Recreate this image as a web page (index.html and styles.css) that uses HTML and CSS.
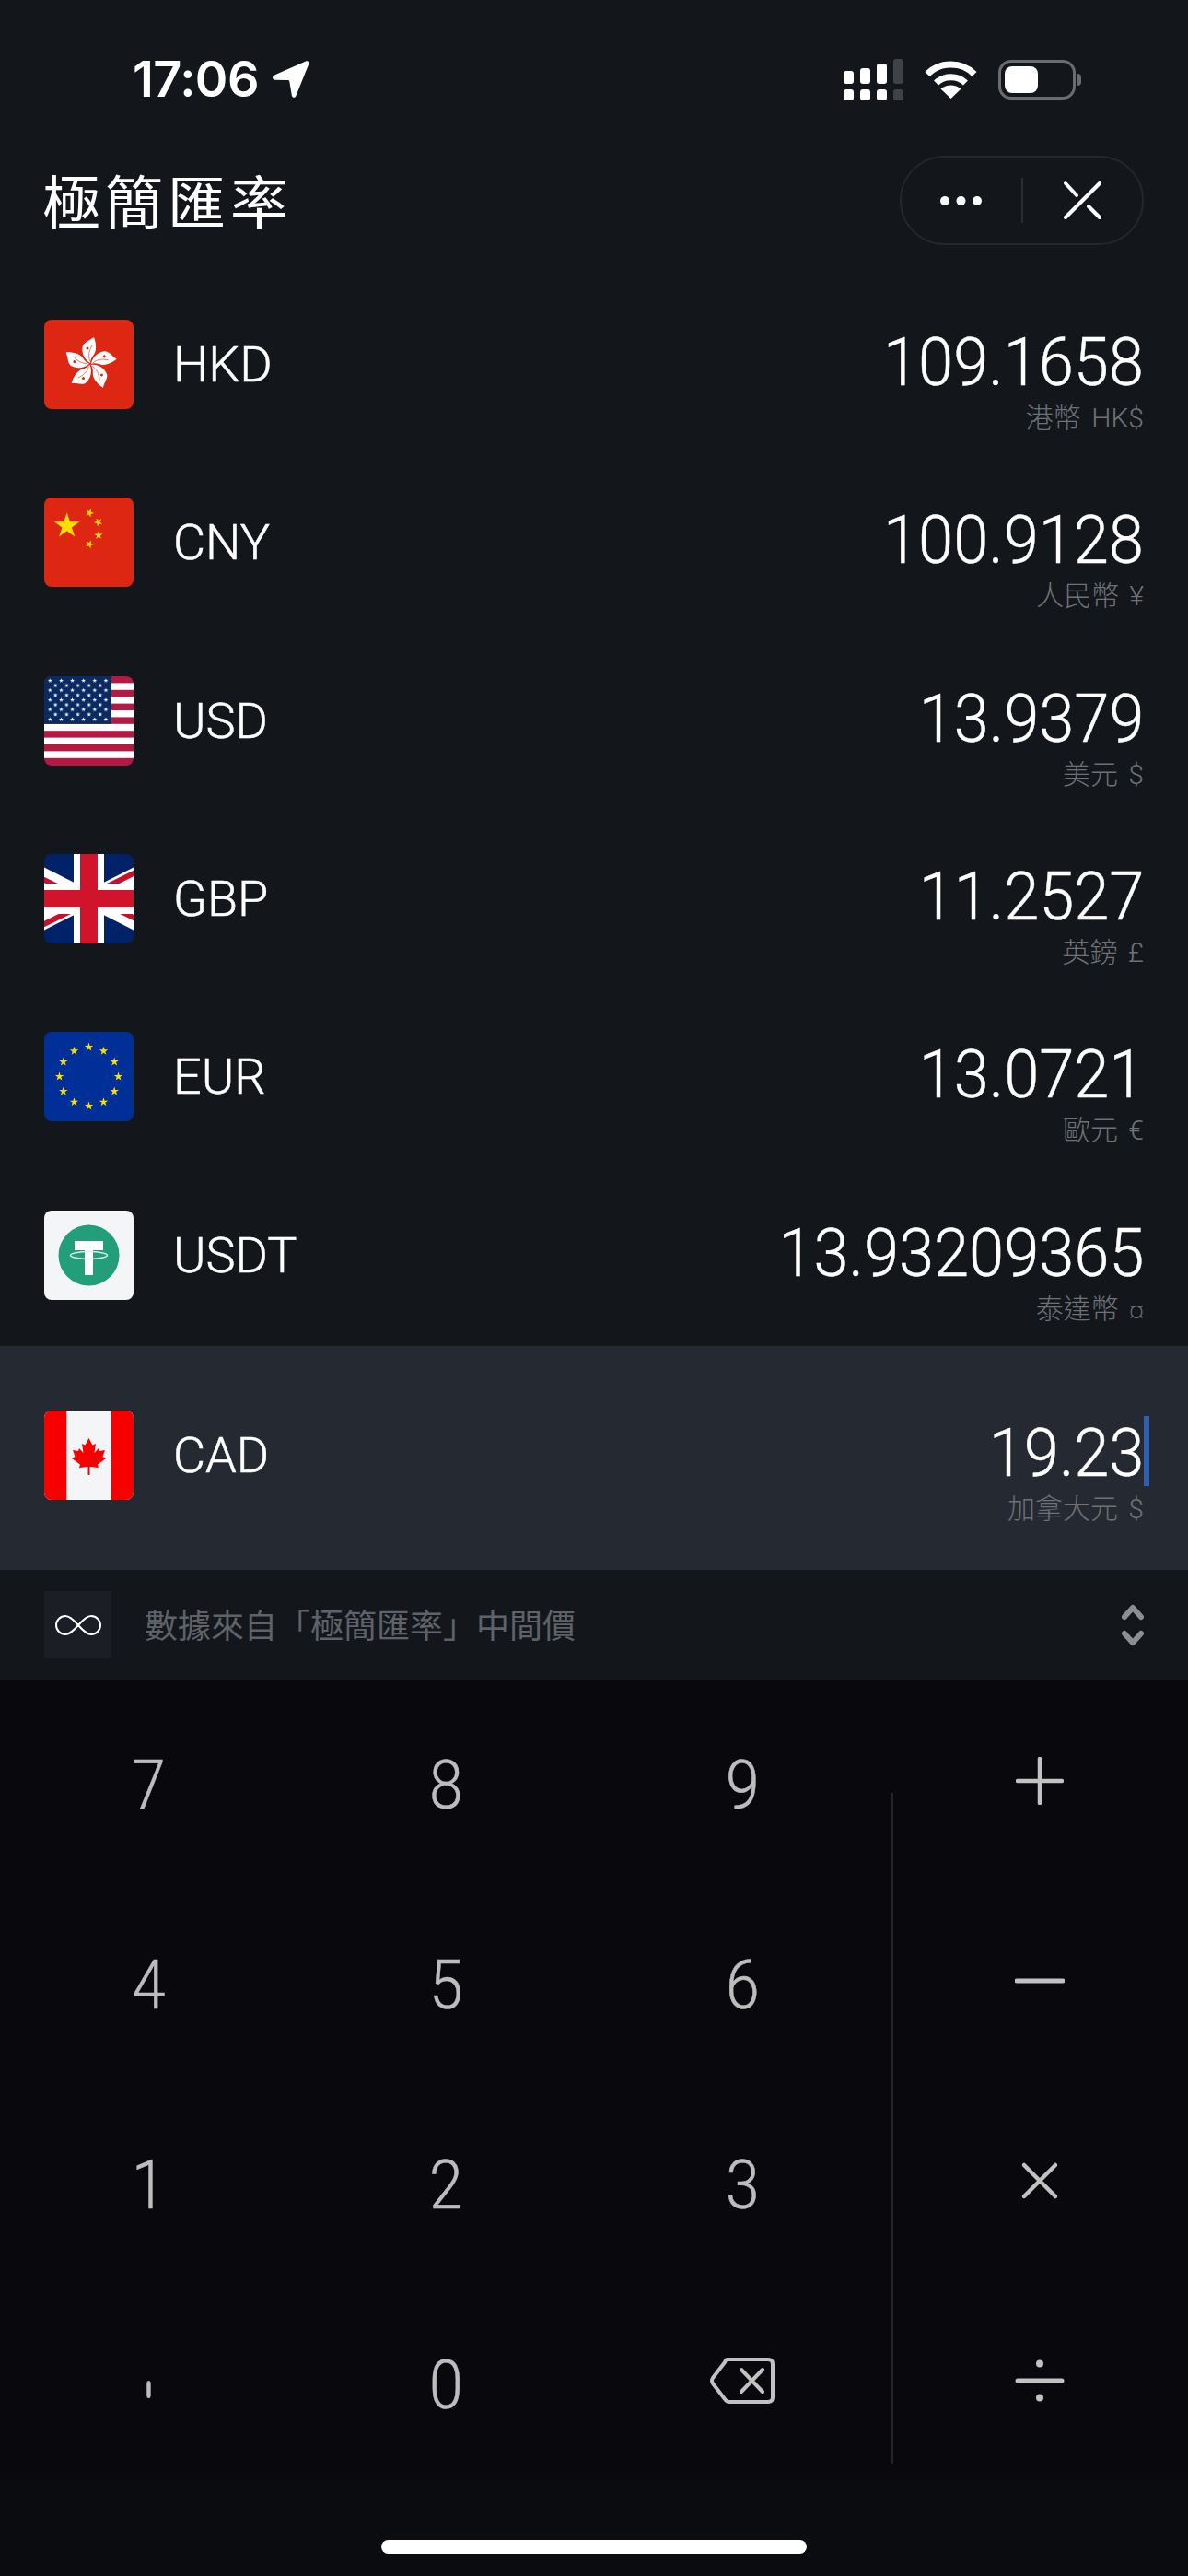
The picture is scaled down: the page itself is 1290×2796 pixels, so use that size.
FILE: index.html
```html
<!DOCTYPE html>
<html lang="zh-Hant">
<head>
<meta charset="utf-8">
<title>極簡匯率</title>
<link rel="stylesheet" href="styles.css">
</head>
<body>
<div class="screen">
  <svg class="defs" width="0" height="0" aria-hidden="true">
    <defs>
      <polygon id="star" points="0,-1 .2245,-.309 .951,-.309 .363,.118 .588,.809 0,.382 -.588,.809 -.363,.118 -.951,-.309 -.2245,-.309"/>
      <pattern id="usstars" x="3" y="2" width="12.13" height="10.5" patternUnits="userSpaceOnUse">
        <use href="#star" transform="translate(3.3 2.7) scale(2.5)" fill="#fff"/>
        <use href="#star" transform="translate(9.3 8) scale(2.5)" fill="#fff"/>
      </pattern>
      <g id="petal">
        <path d="M0,-1 C-7,-5 -10,-13 -8,-20 C-6,-24 -1,-25 4,-29 C7,-21 7,-13 3,-9 C1,-6 0,-4 0,-1Z" fill="#fff"/>
        <path d="M0,-3 C-3,-8 -1,-15 2,-20" fill="none" stroke="#e8604c" stroke-width=".8"/>
        <circle cx="-3" cy="-17" r="1.5" fill="#de2712"/>
      </g>
    </defs>
  </svg>

  <div class="status">
    <div class="time-wrap">
      <span class="time">17:06</span>
      <svg class="loc" width="41" height="40" viewBox="0 0 41 40"><path d="M37 .6 3 15.5c-3 1.4-2.4 5 .8 5.2l14 .4c.8 0 1.4.6 1.5 1.4l2.6 15.300c.6 2.600 3.600 2.800 4.500.300L40.300 3.600C41 1.200 39.200-.300 37 .6Z" fill="#fff"/></svg>
    </div>
    <div class="sys">
      <svg class="signal" width="66" height="46" viewBox="0 0 66 46">
        <g fill="#fff">
          <rect x="0" y="13" width="11" height="14" rx="3"/><rect x="18" y="10" width="11" height="17" rx="3"/><rect x="36" y="5" width="11" height="22" rx="3"/>
          <rect x="0" y="33" width="11" height="12" rx="3"/><rect x="18" y="33" width="11" height="12" rx="3"/><rect x="36" y="33" width="11" height="12" rx="3"/>
        </g>
        <g fill="#3f4348">
          <rect x="54" y="0" width="11" height="27" rx="3"/><rect x="54" y="33" width="11" height="12" rx="3"/>
        </g>
      </svg>
      <svg class="wifi" width="57" height="42" viewBox="0 0 57 42">
        <g fill="none" stroke="#fff" stroke-width="7">
          <path d="M3 15.500C16.500 1.500 40.500 1.500 54 15.500"/>
          <path d="M12.500 25C21 16.500 36 16.500 44.500 25"/>
        </g>
        <path d="M28.500 42 17.500 31.500C24 26 33 26 39.500 31.500Z" fill="#fff"/>
      </svg>
      <div class="battery"><div class="battery-fill"></div><div class="battery-nub"></div></div>
    </div>
  </div>

  <header class="header">
    <h1 class="title">極簡匯率</h1>
    <div class="pill">
      <div class="pill-cell">
        <svg class="dots" width="52" height="12" viewBox="0 0 52 12"><g fill="#fff"><circle cx="6" cy="6" r="5"/><circle cx="23.500" cy="6" r="5"/><circle cx="41" cy="6" r="5"/></g></svg>
      </div>
      <div class="pill-div"></div>
      <div class="pill-cell">
        <svg width="43" height="43" viewBox="0 0 43 43"><g fill="none" stroke="#fff" stroke-width="4" stroke-linecap="round"><path d="M40 3 3 40"/><path d="M3 3 15 16"/><path d="M28 28 40 40"/></g></svg>
      </div>
    </div>
  </header>

  <div class="row">
    <svg class="flag" viewBox="0 0 97 97">
      <rect width="97" height="97" fill="#de2712"/>
      <g transform="translate(50 48)">
        <use href="#petal"/>
        <use href="#petal" transform="rotate(72)"/>
        <use href="#petal" transform="rotate(144)"/>
        <use href="#petal" transform="rotate(216)"/>
        <use href="#petal" transform="rotate(288)"/>
      </g>
    </svg>
    <span class="code">HKD</span>
    <div class="val"><div class="num"><span class="digits">109.1658</span></div><div class="sub">港幣 HK$</div></div>
  </div>

  <div class="row">
    <svg class="flag" viewBox="0 0 97 97">
      <rect width="97" height="97" fill="#de2712"/>
      <g fill="#ffde00">
        <use href="#star" transform="translate(24.700 30.700) scale(14.500)"/>
        <use href="#star" transform="translate(49.300 16.700) rotate(23) scale(4.800)"/>
        <use href="#star" transform="translate(58.700 26.700) rotate(46) scale(4.800)"/>
        <use href="#star" transform="translate(59 41) rotate(70) scale(4.800)"/>
        <use href="#star" transform="translate(49.300 50.700) rotate(21) scale(4.800)"/>
      </g>
    </svg>
    <span class="code">CNY</span>
    <div class="val"><div class="num"><span class="digits">100.9128</span></div><div class="sub">人民幣 ¥</div></div>
  </div>

  <div class="row">
    <svg class="flag" viewBox="0 0 97 97">
      <rect width="97" height="97" fill="#b31942"/>
      <g fill="#fff">
        <rect y="7.400" width="97" height="7.400"/><rect y="22.200" width="97" height="7.400"/><rect y="37" width="97" height="7.400"/>
        <rect y="51.800" width="97" height="7.400"/><rect y="66.600" width="97" height="7.400"/><rect y="81.400" width="97" height="7.400"/>
      </g>
      <rect width="73" height="51.800" fill="#0a2a62"/>
      <rect x="3" y="2" width="67" height="47" fill="url(#usstars)"/>
    </svg>
    <span class="code">USD</span>
    <div class="val"><div class="num"><span class="digits">13.9379</span></div><div class="sub">美元 $</div></div>
  </div>

  <div class="row">
    <svg class="flag" viewBox="0 0 97 97">
      <rect width="97" height="97" fill="#012169"/>
      <g fill="none" stroke="#fff" stroke-width="17">
        <path d="M-10 19 107 78"/><path d="M-10 78 107 19"/>
      </g>
      <g fill="none" stroke="#c8102e" stroke-width="6">
        <path d="M-4 26 48.500 52"/><path d="M48.500 45 101 19"/>
        <path d="M-4 78 48.500 52"/><path d="M48.500 45 101 71"/>
      </g>
      <rect x="32" width="33" height="97" fill="#fff"/>
      <rect y="32" width="97" height="33" fill="#fff"/>
      <rect x="39" width="19" height="97" fill="#cf142b"/>
      <rect y="39" width="97" height="19" fill="#cf142b"/>
    </svg>
    <span class="code">GBP</span>
    <div class="val"><div class="num"><span class="digits">11.2527</span></div><div class="sub">英鎊 £</div></div>
  </div>

  <div class="row">
    <svg class="flag" viewBox="0 0 97 97">
      <rect width="97" height="97" fill="#003097"/>
      <g fill="#ffdd00">
        <use href="#star" transform="translate(48.500 16.500) scale(5)"/>
        <use href="#star" transform="translate(64.500 20.800) scale(5)"/>
        <use href="#star" transform="translate(76.200 32.500) scale(5)"/>
        <use href="#star" transform="translate(80.500 48.500) scale(5)"/>
        <use href="#star" transform="translate(76.200 64.500) scale(5)"/>
        <use href="#star" transform="translate(64.500 76.200) scale(5)"/>
        <use href="#star" transform="translate(48.500 80.500) scale(5)"/>
        <use href="#star" transform="translate(32.500 76.200) scale(5)"/>
        <use href="#star" transform="translate(20.800 64.500) scale(5)"/>
        <use href="#star" transform="translate(16.500 48.500) scale(5)"/>
        <use href="#star" transform="translate(20.800 32.500) scale(5)"/>
        <use href="#star" transform="translate(32.500 20.800) scale(5)"/>
      </g>
    </svg>
    <span class="code">EUR</span>
    <div class="val"><div class="num"><span class="digits">13.0721</span></div><div class="sub">歐元 €</div></div>
  </div>

  <div class="row">
    <svg class="flag" viewBox="0 0 97 97">
      <rect width="97" height="97" fill="#f4f5f7"/>
      <circle cx="48.500" cy="48.500" r="33" fill="#229e7a"/>
      <path d="M33 33H64V43H53V70H44V43H33Z" fill="#fff"/>
      <ellipse cx="48.500" cy="48.500" rx="20" ry="4" fill="none" stroke="#d4efe5" stroke-width="1.500"/>
    </svg>
    <span class="code">USDT</span>
    <div class="val"><div class="num"><span class="digits">13.93209365</span></div><div class="sub">泰達幣 <span class="sub-sym">¤</span></div></div>
  </div>

  <div class="row row-active">
    <svg class="flag" viewBox="0 0 97 97">
      <rect width="97" height="97" fill="#f4f5f7"/>
      <rect width="24.300" height="97" fill="#f70000"/>
      <rect x="72.700" width="24.300" height="97" fill="#f70000"/>
      <polygon fill="#f70000" points="48.500,30 44.500,37.500 41,36 42.500,46 38,41 37,44 31,43 33.500,50 30,52 39,58.500 38,62 47.500,61 47.500,70 49.500,70 49.500,61 59,62 58,58.500 67,52 63.500,50 66,43 60,44 59,41 54.500,46 56,36 52.500,37.500"/>
    </svg>
    <span class="code">CAD</span>
    <div class="val"><div class="num"><span class="digits">19.23</span><span class="caret"></span></div><div class="sub">加拿大元 $</div></div>
  </div>

  <div class="source">
    <div class="source-icon">
      <svg width="50" height="22" viewBox="0 0 50 22"><path d="M25 11C19 4 14 1 11 1A10 10 0 0 0 11 21C14 21 19 18 25 11C31 4 36 1 39 1A10 10 0 0 1 39 21C36 21 31 18 25 11Z" fill="none" stroke="#fff" stroke-width="2"/></svg>
    </div>
    <span class="source-text">數據來自「極簡匯率」中間價</span>
    <svg class="updown" width="24" height="48" viewBox="0 0 24 48"><g fill="none" stroke="#8b8e93" stroke-width="6" stroke-linecap="round" stroke-linejoin="round"><path d="M3 15 12 5 21 15"/><path d="M3 33 12 43 21 33"/></g></svg>
  </div>

  <div class="keypad">
    <div class="key">7</div><div class="key">8</div><div class="key">9</div>
    <div class="key op"><svg width="52" height="52" viewBox="0 0 52 52"><path d="M26 2V50M2 26H50" fill="none" stroke="#c2c2c2" stroke-width="4.500" stroke-linecap="round"/></svg></div>
    <div class="key">4</div><div class="key">5</div><div class="key">6</div>
    <div class="key op"><svg width="54" height="6" viewBox="0 0 54 6"><path d="M2 3H52" fill="none" stroke="#c2c2c2" stroke-width="5" stroke-linecap="round"/></svg></div>
    <div class="key">1</div><div class="key">2</div><div class="key">3</div>
    <div class="key op"><svg width="42" height="42" viewBox="0 0 42 42"><path d="M4 4 38 38M38 4 4 38" fill="none" stroke="#c2c2c2" stroke-width="4.500" stroke-linecap="round"/></svg></div>
    <div class="key"><span class="tick"></span></div><div class="key">0</div>
    <div class="key op"><svg width="72" height="52" viewBox="0 0 72 52"><path d="M20 3H64Q69 3 69 8V44Q69 49 64 49H22Q19 49 17 46L4 29Q2 26 4 23L17 6Q18 3 20 3Z M35 14 58 38M58 14 35 38" fill="none" stroke="#c2c2c2" stroke-width="4" stroke-linejoin="round" stroke-linecap="round"/></svg></div>
    <div class="key op"><svg width="54" height="46" viewBox="0 0 54 46"><circle cx="27" cy="4.500" r="4" fill="#c2c2c2"/><circle cx="27" cy="41.500" r="4" fill="#c2c2c2"/><path d="M3 23H51" fill="none" stroke="#c2c2c2" stroke-width="5" stroke-linecap="round"/></svg></div>
  </div>

  <div class="home"><div class="home-bar"></div></div>
</div>
</body>
</html>
```

FILE: styles.css
```css
* { box-sizing: border-box; }
html, body { margin: 0; padding: 0; }
body { background: #0a0c10; font-family: "Noto Sans CJK TC", "Noto Sans", sans-serif; }
.screen { width: 1290px; height: 2796px; overflow: hidden; background: #0a0c10; color: #fff; }
.defs { position: absolute; }

.status { height: 140px; background: #13171c; display: flex; justify-content: space-between; align-items: flex-start; padding: 64px 122px 0 144px; }
.time-wrap { display: flex; align-items: center; gap: 14px; height: 44px; }
.time { font: 600 54px/44px Inter, sans-serif; letter-spacing: -.5px; }
.sys { display: flex; align-items: flex-start; }
.wifi { margin: 1px 0 0 22px; }
.battery { position: relative; width: 84px; height: 43px; margin: 1px 0 0 23px; border: 3px solid #6a6d70; border-radius: 14px; }
.battery-fill { width: 36px; height: 29px; margin: 4px 0 0 4px; background: #fff; border-radius: 8px; }
.battery-nub { position: absolute; right: -9px; top: 12px; width: 5px; height: 13px; background: #6a6d70; border-radius: 0 4px 4px 0; }

.header { height: 161px; background: #13171c; display: flex; justify-content: space-between; align-items: flex-start; padding: 29px 48px 0; }
.title { margin: 0 0 0 -2px; font-size: 63px; line-height: 93px; font-weight: 400; letter-spacing: 5px; }
.pill { width: 265px; height: 97px; border: 2px solid #24272c; border-radius: 49px; display: flex; align-items: center; }
.pill-cell { flex: 1; display: flex; align-items: center; justify-content: center; }
.dots { margin-left: 4px; }
.pill-div { width: 2px; height: 49px; background: #2a2d32; }

.row { height: 193.33px; background: #13171c; display: flex; align-items: flex-start; padding: 46px 48px 0; }
.row-active { height: 243px; background: #252a32; padding-top: 70px; }
.flag { width: 97px; height: 97px; border-radius: 8px; flex: none; }
.code { margin-left: 43px; font: 300 54px/97px Roboto, sans-serif; -webkit-text-stroke: .5px #fff; }
.val { margin-left: auto; text-align: right; }
.num { position: relative; height: 87px; font: 300 73px/92px Roboto, sans-serif; white-space: nowrap; -webkit-text-stroke: .4px #fff; }
.digits { display: inline-block; transform: scaleX(.94); transform-origin: right center; }
.caret { position: absolute; right: -6px; top: 6px; width: 6px; height: 76px; background: #2f5fb3; }
.sub { height: 40px; font: 300 30px/40px Roboto, "Noto Sans CJK TC", sans-serif; word-spacing: 4px; color: #6e7176; white-space: nowrap; }
.sub-sym { font-size: 22px; }

.source { height: 120px; background: #13171c; display: flex; align-items: center; padding: 0 48px; }
.source-icon { width: 73px; height: 73px; background: #1b1e25; display: flex; align-items: center; justify-content: center; }
.source-text { margin: -4px 0 0 36px; font-size: 36px; color: #5f6268; }
.updown { margin-left: auto; }

.keypad { position: relative; height: 868px; padding-top: 5px; background: #09090d; display: grid; grid-template-columns: repeat(4, 1fr); grid-template-rows: repeat(4, 217px); }
.keypad::before { content: ""; position: absolute; left: 967px; top: 122px; width: 3px; height: 728px; background: #232428; }
.key { display: flex; align-items: center; justify-content: center; font: 300 75px/1 Roboto, sans-serif; color: #bdbdbd; -webkit-text-stroke: .5px #bdbdbd; transform: scaleX(.88); }
.op { transform: none; }
.op svg { margin-top: -8px; }
.tick { display: block; width: 5px; height: 19px; margin-top: 11px; border-radius: 3px; background: #bdbdbd; }

.home { height: 104px; padding-top: 65px; }
.home-bar { width: 462px; height: 15px; margin: 0 auto; background: #fff; border-radius: 8px; }
```
